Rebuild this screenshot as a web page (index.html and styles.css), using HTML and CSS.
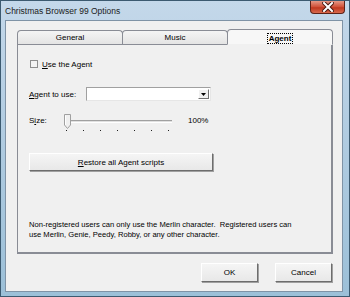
FILE: index.html
```html
<!DOCTYPE html>
<html lang="en">
<head>
    <meta charset="UTF-8">
    <title>Christmas Browser 99 Options</title>
    <link rel="stylesheet" href="styles.css">
</head>
<body>
    <div class="window">
        <div class="titlebar">
            <span class="title">Christmas Browser 99 Options</span>
            <div class="close-btn">
                <svg width="12" height="10" viewBox="0 0 12 10">
                    <path d="M2 1 L10 9 M10 1 L2 9" stroke="#4a1a12" stroke-width="4" stroke-linecap="square"/>
                    <path d="M2 1 L10 9 M10 1 L2 9" stroke="#ffffff" stroke-width="2" stroke-linecap="square"/>
                </svg>
            </div>
        </div>

        <div class="client">
            <div class="tabs">
                <div class="tab">General</div>
                <div class="tab">Music</div>
                <div class="tab tab-active"><span class="focus">Agent</span></div>
            </div>

            <div class="panel">
                <div class="row row-check">
                    <span class="checkbox"></span>
                    <span><u>U</u>se the Agent</span>
                </div>

                <div class="row row-agent">
                    <span class="label"><u>A</u>gent to use:</span>
                    <div class="combo">
                        <div class="combo-btn">
                            <svg width="5" height="3" viewBox="0 0 5 3"><path d="M0 0 H5 L2.5 3 Z" fill="#000"/></svg>
                        </div>
                    </div>
                </div>

                <div class="row row-size">
                    <span class="label">S<u>i</u>ze:</span>
                    <div class="slider">
                        <div class="track"></div>
                        <div class="thumb">
                            <svg width="7" height="15" viewBox="0 0 7 15">
                                <path d="M0.5 0.5 H6.5 V11 L3.5 14.5 L0.5 11 Z" fill="#f0f0f0" stroke="#a0a0a0"/>
                                <path d="M1.5 1.5 V11" stroke="#ffffff"/>
                            </svg>
                        </div>
                        <div class="ticks">
                            <i></i><i></i><i></i><i></i><i></i><i></i><i></i>
                        </div>
                    </div>
                    <span class="pct">100%</span>
                </div>

                <div class="btn btn-restore"><u>R</u>estore all Agent scripts</div>

                <p class="note">Non-registered users can only use the Merlin character.&nbsp; Registered users can<br>use Merlin, Genie, Peedy, Robby, or any other character.</p>
            </div>

            <div class="buttons">
                <div class="btn btn-dlg">OK</div>
                <div class="btn btn-dlg">Cancel</div>
            </div>
        </div>
    </div>
</body>
</html>
```

FILE: styles.css
```css
* {
    margin: 0;
    padding: 0;
    box-sizing: border-box;
}

body {
    background: #ffffff;
    font-family: "Liberation Sans", Arial, sans-serif;
    font-size: 8px;
    color: #000;
}

.window {
    width: 350px;
    height: 297px;
    background: linear-gradient(180deg, #c4d8ea 0%, #b3cde2 40%, #9cc0d8 100%);
    border: 1px solid #3c5a70;
    display: flex;
    flex-direction: column;
    overflow: hidden;
}

.titlebar {
    height: 19px;
    display: flex;
    align-items: flex-start;
    justify-content: space-between;
    padding-left: 4px;
}

.title {
    font-size: 8.5px;
    margin-top: 5px;
    color: #1b1b1b;
}

.close-btn {
    width: 35px;
    height: 14px;
    margin-right: 4px;
    margin-top: -1px;
    border: 1px solid #5c2218;
    border-top: none;
    border-radius: 0 0 4px 4px;
    background: linear-gradient(180deg, #e8a493 0%, #d2553d 50%, #c0381f 60%, #d86a4e 100%);
    display: flex;
    align-items: center;
    justify-content: center;
}

.client {
    margin: 0 6px 4px 4px;
    flex: 1;
    background: #f0f0f0;
    border: 1px solid #7f93a6;
    padding: 8px 9px 0 11px;
    display: flex;
    flex-direction: column;
}

.tabs {
    display: flex;
    align-items: flex-end;
    height: 15px;
    position: relative;
    z-index: 1;
}

.tab {
    width: 106px;
    height: 14px;
    border: 1px solid #898c95;
    border-bottom: none;
    border-radius: 4px 4px 0 0;
    background: linear-gradient(180deg, #f4f4f4, #e4e4e4);
    text-align: center;
    line-height: 13px;
    font-size: 8px;
}

.tab + .tab {
    margin-left: -1px;
}

.tab-active {
    height: 16px;
    width: 106px;
    background: #f7f7f7;
    font-weight: bold;
    border-bottom: 1px solid #f0f0f0;
    margin-bottom: -1px;
    display: flex;
    align-items: center;
    justify-content: center;
}

.focus {
    border: 1px dotted #000;
    height: 11px;
    line-height: 9px;
    padding: 0 1px;
    margin-top: 2px;
}

.panel {
    height: 210px;
    border: 1px solid #898c95;
    border-right: 2px solid #898c95;
    border-bottom: 2px solid #898c95;
    background: #f0f0f0;
    padding: 0 0 0 11px;
    display: flex;
    flex-direction: column;
}

.row {
    display: flex;
    align-items: center;
    height: 12px;
}

.row-check {
    margin-top: 13px;
    gap: 4px;
}

.checkbox {
    width: 8px;
    height: 8px;
    border: 1px solid #8f8f8f;
    background: #f4f4f4;
    margin-left: 1px;
}

.row-agent {
    margin-top: 17px;
    height: 14px;
}

.label {
    width: 57px;
}

.combo {
    width: 125px;
    height: 14px;
    background: #ffffff;
    border: 1px solid #a0a0a0;
    border-right-color: #e6e6e6;
    border-bottom-color: #e6e6e6;
    display: flex;
    justify-content: flex-end;
    padding: 1px;
}

.combo-btn {
    width: 11px;
    height: 10px;
    background: #f0f0f0;
    border: 1px solid #fff;
    border-right-color: #707070;
    border-bottom-color: #707070;
    display: flex;
    align-items: center;
    justify-content: center;
}

.row-size {
    margin-top: 14px;
    height: 18px;
    align-items: flex-start;
}

.row-size .label {
    width: 37px;
    margin-top: 1px;
}

.slider {
    width: 110px;
    height: 18px;
    position: relative;
}

.track {
    position: absolute;
    left: 0;
    right: 4px;
    top: 5px;
    height: 3px;
    border-top: 1px solid #a0a0a0;
    border-bottom: 1px solid #ffffff;
    background: #e0e0e0;
}

.thumb {
    position: absolute;
    left: -2px;
    top: -1px;
    line-height: 0;
}

.ticks {
    position: absolute;
    left: 0;
    top: 15px;
    width: 103px;
    display: flex;
    justify-content: space-between;
}

.ticks i {
    width: 1px;
    height: 1px;
    background: #202020;
}

.pct {
    margin-left: 12px;
    margin-top: 1px;
}

.btn {
    background: linear-gradient(180deg, #f5f5f5, #e8e8e8);
    border: 1px solid #ffffff;
    border-right-color: #6d6d6d;
    border-bottom-color: #6d6d6d;
    box-shadow: 1px 1px 0 #a0a0a0;
    display: flex;
    align-items: center;
    justify-content: center;
}

.btn-restore {
    width: 184px;
    height: 18px;
    margin-top: 20px;
}

.note {
    margin-top: 49px;
    line-height: 10px;
    font-size: 7.6px;
}

.buttons {
    display: flex;
    justify-content: flex-end;
    gap: 17px;
    margin-top: 9px;
    padding-right: 1px;
}

.btn-dlg {
    width: 57px;
    height: 19px;
}
```
